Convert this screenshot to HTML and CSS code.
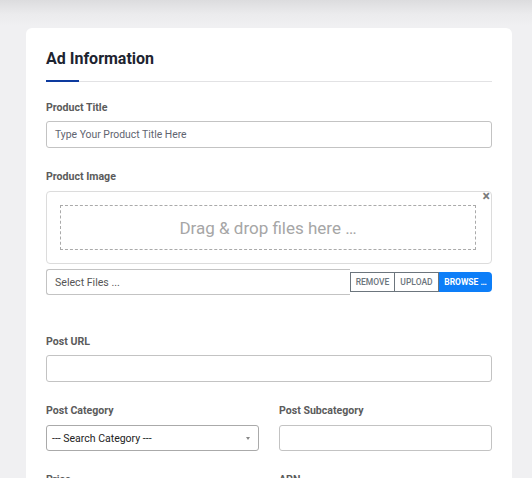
FILE: index.html
```html
<!DOCTYPE html>
<html>
<head>
<meta charset="utf-8">
<link rel="stylesheet" href="styles.css">
</head>
<body>
<div class="page">
  <div class="card">
    <h2 class="card-title">Ad Information</h2>
    <div class="sep"><span class="sep-accent"></span></div>

    <div class="field field-first">
      <label class="label">Product Title</label>
      <div class="input"><span class="placeholder">Type Your Product Title Here</span></div>
    </div>

    <div class="field field-img">
      <label class="label">Product Image</label>
      <div class="dropbox">
        <span class="close">×</span>
        <div class="dropzone">Drag &amp; drop files here …</div>
      </div>
      <div class="input-group">
        <div class="file-caption">Select Files ...</div>
        <div class="btns">
          <span class="btn btn-outline">REMOVE</span>
          <span class="btn btn-outline btn-mid">UPLOAD</span>
          <span class="btn btn-primary">BROWSE …</span>
        </div>
      </div>
    </div>

    <div class="field field-url">
      <label class="label">Post URL</label>
      <div class="input"></div>
    </div>

    <div class="row">
      <div class="field">
        <label class="label">Post Category</label>
        <div class="select">
          <span>--- Search Category ---</span>
          <span class="caret"></span>
        </div>
      </div>
      <div class="field">
        <label class="label">Post Subcategory</label>
        <div class="input"></div>
      </div>
    </div>

    <div class="row">
      <div class="field">
        <label class="label">Price</label>
        <div class="input"></div>
      </div>
      <div class="field">
        <label class="label">APN</label>
        <div class="input"></div>
      </div>
    </div>
  </div>
</div>
</body>
</html>
```

FILE: styles.css
```css
* { box-sizing: border-box; }
html, body { margin: 0; padding: 0; }
body {
  font-family: Roboto, "Liberation Sans", sans-serif;
  background: linear-gradient(to bottom, #dcdcde 0px, #ebebed 14px, #f0f0f2 26px, #f0f0f2 100%);
  width: 532px;
  height: 478px;
  overflow: hidden;
}
.page {
  padding: 28px 20px 0 26px;
}
.card {
  background: #fff;
  border-radius: 6px;
  padding: 20px 20px 20px 20px;
  width: 486px;
}
.card-title {
  margin: 0;
  font-size: 16px;
  line-height: 20px;
  padding-top: 1px;
  font-weight: 700;
  color: #1d2430;
}
.sep {
  margin-top: 11px;
  height: 2px;
  position: relative;
  background: linear-gradient(to bottom, transparent 0, transparent 1px, #e2e2e4 1px, #e2e2e4 2px);
}
.sep-accent {
  position: absolute;
  left: 0;
  top: 0;
  width: 33px;
  height: 2px;
  background: #0d3a9e;
}
.field {
  display: flex;
  flex-direction: column;
  margin-top: 19px;
}
.field-first { margin-top: 18px; }
.field-img { margin-top: 21px; }
.label {
  font-size: 10.6px;
  line-height: 14px;
  padding-top: 1px;
  font-weight: 700;
  color: #5b5b5b;
  margin-bottom: 6px;
}
.field-img .label { margin-bottom: 7px; }
.input {
  height: 27px;
  border: 1px solid #c3c3c3;
  border-radius: 3px;
  display: flex;
  align-items: center;
  padding: 0 8px;
}
.placeholder {
  font-size: 10.4px;
  color: #5f6470;
}
.dropbox {
  position: relative;
  height: 73px;
  border: 1px solid #dcdcdc;
  border-radius: 4px;
  padding: 13px 15px 13px 13px;
}
.close {
  position: absolute;
  right: 1px;
  top: -3px;
  font-size: 14px;
  font-weight: 700;
  color: #7a7a7a;
  line-height: 14px;
}
.dropzone {
  height: 45px;
  border: 1px dashed #aaa;
  display: flex;
  align-items: center;
  justify-content: center;
  font-size: 17px;
  color: #a6a6a6;
}
.input-group {
  display: flex;
  align-items: center;
  margin-top: 5px;
  height: 26px;
}
.file-caption {
  width: 304px;
  height: 26px;
  border: 1px solid #c3c3c3;
  border-right: 0;
  border-radius: 3px 0 0 3px;
  display: flex;
  align-items: center;
  padding: 0 8px;
  font-size: 10.6px;
  color: #555;
}
.btns {
  display: flex;
  height: 20px;
  flex: 1;
}
.btn {
  display: flex;
  align-items: center;
  justify-content: center;
  font-size: 8.5px;
  font-weight: 500;
}
.btn-outline {
  border: 1px solid #6c757d;
  color: #6c757d;
  width: 45px;
}
.btn-mid {
  border-left: 0;
  width: 44px;
}
.btn-primary {
  flex: 1;
  background: #0d7ef8;
  color: #fff;
  border-radius: 0 4px 4px 0;
  font-weight: 700;
}
.field-url { margin-top: 39px; }
.row {
  display: grid;
  grid-template-columns: 1fr 1fr;
  column-gap: 20px;
  margin-top: 2px;
}
.row .field { margin-top: 19px; }
.row .label { margin-bottom: 7px; }
.select {
  height: 26px;
  border: 1px solid #aaa;
  border-radius: 3px;
  display: flex;
  align-items: center;
  justify-content: space-between;
  padding: 0 8px 0 5px;
  font-size: 10.5px;
  color: #222;
}
.row .input { height: 26px; }
.caret {
  width: 0;
  height: 0;
  border-left: 2.5px solid transparent;
  border-right: 2.5px solid transparent;
  border-top: 3px solid #888;
}
```
